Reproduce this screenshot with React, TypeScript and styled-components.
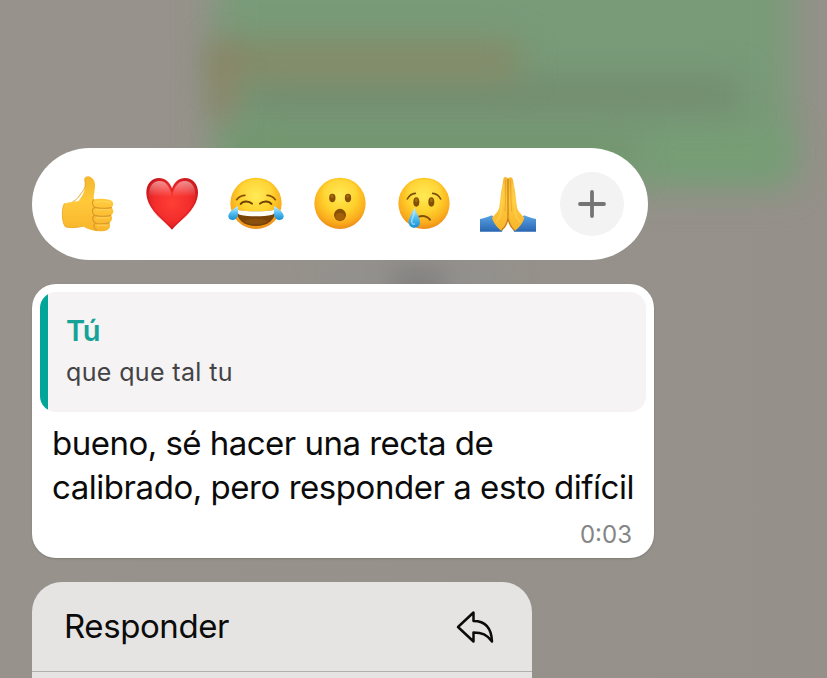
import React from "react";
import styled, { createGlobalStyle } from "styled-components";

const GlobalStyle = createGlobalStyle`
  * { box-sizing: border-box; }
  body { margin: 0; overflow: hidden; font-family: Inter, "Liberation Sans", sans-serif; }
`;

const Screen = styled.main`
  position: relative;
  width: 827px;
  height: 678px;
  overflow: hidden;
  background: linear-gradient(90deg, #97938c, #95918a);
`;

const Backdrop = styled.div`
  position: absolute;
  inset: 0;
`;

const Blob = styled.i<{ $x: number; $y: number; $w: number; $h: number; $c: string; $blur: number }>`
  position: absolute;
  left: ${(p) => p.$x}px;
  top: ${(p) => p.$y}px;
  width: ${(p) => p.$w}px;
  height: ${(p) => p.$h}px;
  background: ${(p) => p.$c};
  filter: blur(${(p) => p.$blur}px);
`;

const Stack = styled.div`
  position: relative;
  display: flex;
  flex-direction: column;
  align-items: flex-start;
  gap: 24px;
  padding: 148px 0 0 32px;
`;

const ReactionBar = styled.div`
  display: flex;
  align-items: center;
  width: 616px;
  height: 112px;
  padding: 0 14px;
  border-radius: 58px / 56px;
  background: #fff;
`;

const Reaction = styled.button`
  display: flex;
  align-items: center;
  justify-content: center;
  flex: 0 0 84px;
  height: 84px;
  padding: 0;
  border: 0;
  background: none;
`;

const More = styled.span`
  display: flex;
  align-items: center;
  justify-content: center;
  width: 64px;
  height: 64px;
  border-radius: 50%;
  background: #f3f3f3;
`;

const Message = styled.article`
  width: 622px;
  height: 274px;
  padding: 8px;
  border-radius: 24px;
  background: #fff;
  box-shadow: 0 1px 2px rgba(0, 0, 0, 0.16);
`;

const Quote = styled.blockquote`
  width: 606px;
  height: 120px;
  margin: 0;
  padding: 20px 0 0 19px;
  border-radius: 16px;
  overflow: hidden;
  background: linear-gradient(90deg, #02a698 8px, #f5f3f4 8px);
`;

const Author = styled.div`
  height: 38px;
  padding-left: 7px;
  color: #16a397;
  font-size: 29px;
  font-weight: 600;
  line-height: 38px;
  letter-spacing: -0.2px;
`;

const Quoted = styled.div`
  padding: 4px 0 0 7px;
  color: #434244;
  font-size: 25px;
  line-height: 36px;
  letter-spacing: 0.36px;
`;

const Body = styled.p`
  margin: 9px 0 0 12px;
  color: #0b0b0b;
  font-size: 33px;
  line-height: 44px;
  white-space: nowrap;
`;

const Line = styled.span<{ $track: number }>`
  display: block;
  letter-spacing: ${(p) => p.$track}px;
`;

const Time = styled.time`
  display: block;
  padding: 11px 14px 0 0;
  color: #858585;
  font-size: 24px;
  line-height: 30px;
  letter-spacing: 0;
  text-align: right;
`;

const Menu = styled.div`
  width: 500px;
  height: 120px;
  border-radius: 30px 30px 0 0;
  background: #e5e4e2;
`;

const MenuItem = styled.div`
  display: flex;
  align-items: center;
  justify-content: space-between;
  height: 90px;
  padding: 0 36px 0 32px;
  border-bottom: 1px solid #b0afad;
  color: #0b0b0b;
  font-size: 33px;
`;

const MenuLabel = styled.span`
  padding-bottom: 2px;
  letter-spacing: -0.42px;
`;

const Gradients = () => (
  <defs>
    <radialGradient id="face" cx="50%" cy="36%" r="64%">
      <stop offset="0" stopColor="#ffe94f" />
      <stop offset=".5" stopColor="#ffd12c" />
      <stop offset=".82" stopColor="#faac1d" />
      <stop offset="1" stopColor="#ec8c18" />
    </radialGradient>
    <linearGradient id="skin" x1="0" y1="0" x2="0" y2="1">
      <stop offset="0" stopColor="#f4b72e" />
      <stop offset=".45" stopColor="#ffc93a" />
      <stop offset="1" stopColor="#f8b52c" />
    </linearGradient>
    <radialGradient id="heart" cx="50%" cy="48%" r="60%">
      <stop offset="0" stopColor="#ff4036" />
      <stop offset=".6" stopColor="#f22c2b" />
      <stop offset="1" stopColor="#ca171d" />
    </radialGradient>
    <linearGradient id="gloss" x1="0" y1="0" x2="0" y2="1">
      <stop offset="0" stopColor="#fff" stopOpacity=".5" />
      <stop offset=".85" stopColor="#fff" stopOpacity="0" />
    </linearGradient>
    <linearGradient id="tear" x1="0" y1="0" x2="0" y2="1">
      <stop offset="0" stopColor="#c8efff" />
      <stop offset=".5" stopColor="#55bdf0" />
      <stop offset="1" stopColor="#168fd4" />
    </linearGradient>
    <linearGradient id="sleeve" x1="0" y1="0" x2="0" y2="1">
      <stop offset="0" stopColor="#58a3e4" />
      <stop offset="1" stopColor="#2a66b2" />
    </linearGradient>
  </defs>
);

const Emoji = ({ children, x = 0 }: { children: React.ReactNode; x?: number }) => (
  <svg width="80" height="80" viewBox={`${x} -3 240 240`} fill="none" strokeLinecap="round" strokeLinejoin="round">
    {children}
  </svg>
);

const Thumb = () => (
  <Emoji x={-6}>
    <Gradients />
    <path d="M103 41c3-8 13-9 20-4 10 7 13 16 12 29-1 13-4 24-4 38 7-3 25-4 46 0 13 2 17 15 8 24 8 7 6 18-2 23 6 8 3 18-5 22 6 12-1 22-14 25-18 3-45 0-66-14-15 3-31 6-51 2-12-11-13-57-4-70 15-6 31-5 42-7 10-14 18-25 20-42z" fill="url(#skin)" />
    <path d="M43 116c-9 13-8 59 4 70 20 4 36 1 51-2" stroke="#edae2e" strokeWidth="3" />
    <path d="M131 104c-6 8-5 17 4 23-10 3-10 17-2 23-7 6-6 19 3 24-7 5-6 17 4 22M135 127c16 4 35 4 49 1M133 151c18 4 35 4 49 0M136 174c14 4 29 3 42-1" stroke="#dc982a" strokeWidth="3.5" />
    <path d="M138 111c13-3 28-2 42 2M139 135c13-2 27-2 41 0M140 159c12-2 25-2 36 0M143 182c10-2 20-2 29 0" stroke="#ffdb67" strokeWidth="5" opacity=".5" />
    <path d="M105 44c4 17 0 27-12 42-7 10-14 19-24 24" stroke="#eaa82d" strokeWidth="3" />
  </Emoji>
);

const Heart = () => (
  <Emoji>
    <path d="M120 194C92 164 43 132 43 82c0-26 17-43 38-43 18 0 32 11 39 31 7-20 21-31 39-31 22 0 39 17 39 43 0 50-50 82-78 112z" fill="url(#heart)" />
    <path d="M120 189C92 158 46 128 46 82c0-24 15-39 35-39 19 0 32 12 39 36 7-24 21-36 39-36 21 0 36 15 36 39 0 46-47 76-75 107z" stroke="#ba1720" strokeWidth="3" opacity=".5" />
    <path d="M52 84c0-21 12-36 30-36 18 0 29 14 35 36v20H52zM123 84c6-22 18-36 36-36s30 15 30 36v20h-66z" fill="url(#gloss)" />
  </Emoji>
);

const Face = () => (
  <>
    <circle cx="120" cy="115" r="77" fill="url(#face)" />
    <ellipse cx="120" cy="76" rx="52" ry="32" fill="#fff58b" opacity=".12" />
  </>
);

const Joy = () => (
  <Emoji>
    <Face />
    <path d="M62 106c7-9 15-13 25-13M178 106c-7-9-15-13-25-13" stroke="#865007" strokeWidth="5" transform="translate(0 -2)" />
    <path d="M74 117c7-10 25-10 34-1M132 116c9-9 27-9 34 1" stroke="#714006" strokeWidth="6" />
    <path d="M61 134c30 6 87 6 118 0 0 28-22 49-59 49s-59-21-59-49z" fill="#794207" />
    <path d="M63 134c31 6 83 6 114 0 0 8-3 13-8 15-30 6-68 6-98 0-5-2-8-7-8-15z" fill="#fffef4" />
    <path d="M83 169c19-10 55-10 74 0-20 13-54 13-74 0z" fill="#8f5410" opacity=".8" />
    <path d="M66 124c-7 3-31 18-29 31 2 13 22 13 27 1 3-8 2-21 2-32zM174 124c7 3 31 18 29 31-2 13-22 13-27 1-3-8-2-21-2-32z" fill="url(#tear)" />
  </Emoji>
);

const Wow = () => (
  <Emoji>
    <Face />
    <g fill="#875006"><ellipse cx="97" cy="99" rx="9.5" ry="12.5" /><ellipse cx="144" cy="99" rx="9.5" ry="12.5" /></g>
    <g fill="#a66d0a"><ellipse cx="96" cy="94" rx="4" ry="5" /><ellipse cx="143" cy="94" rx="4" ry="5" /></g>
    <ellipse cx="120" cy="150" rx="18" ry="18.5" fill="#875006" />
    <ellipse cx="120" cy="155" rx="14" ry="12" fill="#a36008" />
  </Emoji>
);

const Cry = () => (
  <Emoji>
    <Face />
    <path d="M70 102c5-10 13-16 24-17M170 102c-5-10-13-16-24-17" stroke="#79500a" strokeWidth="5" />
    <g fill="#805007"><ellipse cx="97" cy="111" rx="9" ry="14" /><ellipse cx="142" cy="111" rx="9" ry="14" /></g>
    <g fill="#a36e0b"><ellipse cx="97" cy="106" rx="4" ry="6" /><ellipse cx="142" cy="106" rx="4" ry="6" /></g>
    <path d="M105 155c9-4 25-3 33 9" stroke="#805007" strokeWidth="6" />
    <path d="M91 128c5 13 17 31 17 43 0 11-7 17-17 17s-17-7-17-18c0-12 12-29 17-42z" fill="url(#tear)" />
    <path d="M91 142c-2 11-9 22-8 29 1 6 5 8 9 6" stroke="#baf1ff" strokeWidth="4" opacity=".7" />
  </Emoji>
);

const Pray = () => (
  <Emoji>
    <path d="M36 162c14-2 26-7 36-11l33 40-3 9H36zM204 162c-14-2-26-7-36-11l-33 40 3 9h66z" fill="url(#sleeve)" />
    <path d="M107 39c3-5 11-3 13 3 2-6 10-8 13-2 3 5 3 13 5 22 5 19 5 42 9 64 2 15 15 23 22 33-6 18-18 31-28 38-11-5-18-16-21-29-3 13-9 24-20 29-10-7-22-20-28-38 7-10 20-18 22-33 4-22 4-45 9-64 2-9 2-17 4-23z" fill="url(#skin)" />
    <path d="M120 42v117c-2 14-6 25-18 35M121 162c3 14 8 25 18 33" stroke="#c27a20" strokeWidth="3.5" />
    <path d="M106 60c0 30-6 60-8 85-2 12-7 19-13 25M135 60c0 30 5 60 7 85 2 12 7 19 13 25" stroke="#ffdc65" strokeWidth="6" opacity=".4" />
    <path d="M113 46c0 32 0 66-2 92M127 46c1 33 2 65 4 92" stroke="#de952b" strokeWidth="2.5" opacity=".7" />
  </Emoji>
);

const PlusIcon = () => (
  <svg width="32" height="32" viewBox="0 0 32 32" stroke="#747474" strokeWidth="3.8" strokeLinecap="round">
    <path d="M4 16h24M16 4v24" />
  </svg>
);

const ReplyIcon = () => (
  <svg width="42" height="36" viewBox="0 0 42 36" fill="none" stroke="#0b0b0b" strokeWidth="2.5" strokeLinejoin="round">
    <path d="M4 18 19.5 3.5V12C32 12 37.5 20 38 32.5C33 25.5 28 23.5 19.5 23.5V32.5Z" />
  </svg>
);

const reactions = [
  { label: "Me gusta", icon: <Thumb /> },
  { label: "Me encanta", icon: <Heart /> },
  { label: "Risa", icon: <Joy /> },
  { label: "Sorpresa", icon: <Wow /> },
  { label: "Tristeza", icon: <Cry /> },
  { label: "Gracias", icon: <Pray /> },
  { label: "Más", icon: <More><PlusIcon /></More> },
];

export default function App() {
  return (
    <Screen>
      <GlobalStyle />
      <Backdrop aria-hidden>
        <Blob $x={214} $y={-60} $w={580} $h={245} $c="#799b78" $blur={18} />
        <Blob $x={640} $y={130} $w={148} $h={46} $c="#769e75" $blur={16} />
        <Blob $x={230} $y={130} $w={400} $h={46} $c="#73976f" $blur={16} />
        <Blob $x={250} $y={80} $w={490} $h={28} $c="#71896d" $blur={17} />
        <Blob $x={214} $y={42} $w={305} $h={38} $c="#858a68" $blur={16} />
        <Blob $x={212} $y={45} $w={22} $h={75} $c="#8e8266" $blur={14} />
        <Blob $x={320} $y={264} $w={190} $h={30} $c="#92908e" $blur={12} />
        <Blob $x={392} $y={268} $w={52} $h={30} $c="#82807f" $blur={12} />
      </Backdrop>
      <Stack>
        <ReactionBar>
          {reactions.map((r) => (
            <Reaction key={r.label} aria-label={r.label}>{r.icon}</Reaction>
          ))}
        </ReactionBar>
        <Message>
          <Quote>
            <Author>Tú</Author>
            <Quoted>que que tal tu</Quoted>
          </Quote>
          <Body>
            <Line $track={-0.52}>bueno, sé hacer una recta de</Line>
            <Line $track={-0.46}>calibrado, pero responder a esto difícil</Line>
          </Body>
          <Time>0:03</Time>
        </Message>
        <Menu>
          <MenuItem>
            <MenuLabel>Responder</MenuLabel>
            <ReplyIcon />
          </MenuItem>
        </Menu>
      </Stack>
    </Screen>
  );
}
